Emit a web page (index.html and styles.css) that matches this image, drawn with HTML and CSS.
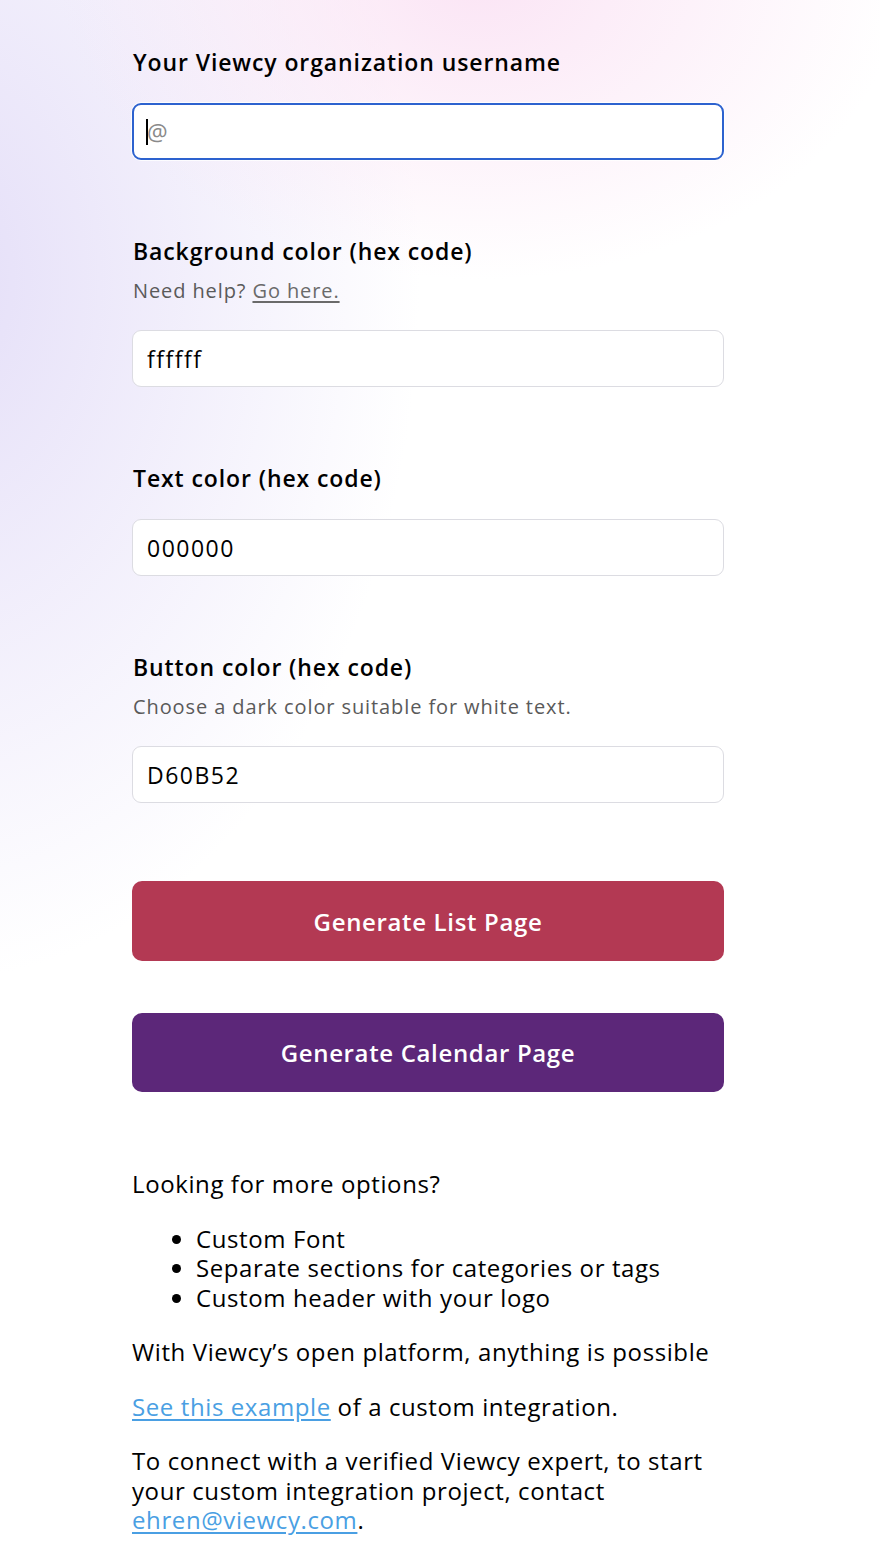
FILE: index.html
```html
<!DOCTYPE html>
<html lang="en">
<head>
<meta charset="utf-8">
<title>Viewcy integration</title>
<link rel="stylesheet" href="styles.css">
</head>
<body>
<main class="page">
  <form class="form">
    <div class="field field-first">
      <label class="label" for="u">Your Viewcy organization username</label>
      <div class="input-wrap">
        <input class="input input-focus" id="u" type="text" placeholder="@">
        <span class="caret"></span>
      </div>
    </div>
    <div class="field">
      <label class="label" for="bg">Background color (hex code)</label>
      <p class="help">Need help? <a href="#" class="help-link">Go here.</a></p>
      <input class="input" id="bg" type="text" value="ffffff">
    </div>
    <div class="field">
      <label class="label" for="tc">Text color (hex code)</label>
      <input class="input" id="tc" type="text" value="000000">
    </div>
    <div class="field">
      <label class="label" for="bc">Button color (hex code)</label>
      <p class="help">Choose a dark color suitable for white text.</p>
      <input class="input" id="bc" type="text" value="D60B52">
    </div>
    <div class="actions">
      <button type="button" class="btn btn-list">Generate List Page</button>
      <button type="button" class="btn btn-cal">Generate Calendar Page</button>
    </div>
  </form>
  <section class="more">
    <p>Looking for more options?</p>
    <ul class="opts">
      <li>Custom Font</li>
      <li>Separate sections for categories or tags</li>
      <li>Custom header with your logo</li>
    </ul>
    <p>With Viewcy’s open platform, anything is possible</p>
    <p><a href="#" class="link">See this example</a> of a custom integration.</p>
    <p>To connect with a verified Viewcy expert, to start your custom integration project, contact <a href="#" class="link">ehren@viewcy.com</a>.</p>
  </section>
</main>
</body>
</html>
```
FILE: styles.css
```css
html, body {
  margin: 0;
  padding: 0;
}
body {
  font-family: "Open Sans", Lato, "Liberation Sans", sans-serif;
  color: #000;
  min-height: 1562px;
  background:
    radial-gradient(ellipse 420px 300px at 480px -20px, rgba(250, 224, 243, 0.85), rgba(250, 224, 243, 0) 100%),
    radial-gradient(ellipse 480px 700px at -60px 280px, rgba(228, 222, 248, 1), rgba(228, 222, 248, 0) 100%),
    #ffffff;
}
.page {
  width: 592px;
  margin-left: 132px;
  padding-top: 47px;
  padding-bottom: 20px;
}
.form {
  display: flex;
  flex-direction: column;
}
.field {
  display: flex;
  flex-direction: column;
  margin-top: 76px;
}
.field-first {
  margin-top: 0;
}
.label {
  font-size: 23px;
  line-height: 30px;
  font-weight: 600;
  letter-spacing: 0.9px;
  margin-left: 1px;
  margin-bottom: 26px;
}
.help {
  margin: -15px 0 25px 1px;
  font-size: 20px;
  line-height: 28px;
  letter-spacing: 0.9px;
  color: #5a5a5a;
}
.help-link {
  color: #6a6a6a;
  text-decoration: underline;
  text-underline-offset: 3px;
}
.input-wrap {
  position: relative;
  display: flex;
}
.input {
  box-sizing: border-box;
  width: 592px;
  height: 57px;
  border: 1px solid #dcdce2;
  border-radius: 9px;
  background: #fff;
  padding: 0 14px;
  font-family: inherit;
  font-size: 23px;
  letter-spacing: 1.5px;
  color: #000;
  outline: none;
}
.input-focus {
  border: 2px solid #2d62cf;
  padding-left: 13px;
  box-shadow: 0 0 0 1px rgba(255,255,255,0.8);
}
.input::placeholder {
  color: #8a8a8a;
}
.caret {
  position: absolute;
  left: 14px;
  top: 16px;
  width: 2px;
  height: 26px;
  background: #000;
}
.actions {
  display: flex;
  flex-direction: column;
  gap: 52px;
  margin-top: 78px;
}
.btn {
  height: 80px;
  width: 592px;
  border: 0;
  border-radius: 10px;
  color: #fff;
  font-family: inherit;
  font-size: 24px;
  font-weight: 600;
  letter-spacing: 0.65px;
}
.btn-list {
  background: #b33953;
}
.btn-cal {
  background: #5c2779;
  height: 79px;
}
.more {
  margin-top: 77px;
  font-size: 24px;
  line-height: 29.5px;
  letter-spacing: 0.6px;
}
.more p {
  margin: 0 0 25px 0;
}
.opts {
  margin: 0 0 25px 0;
  padding-left: 64px;
}
.link {
  color: #4a9fe3;
  text-decoration: underline;
  text-underline-offset: 3px;
}
```
